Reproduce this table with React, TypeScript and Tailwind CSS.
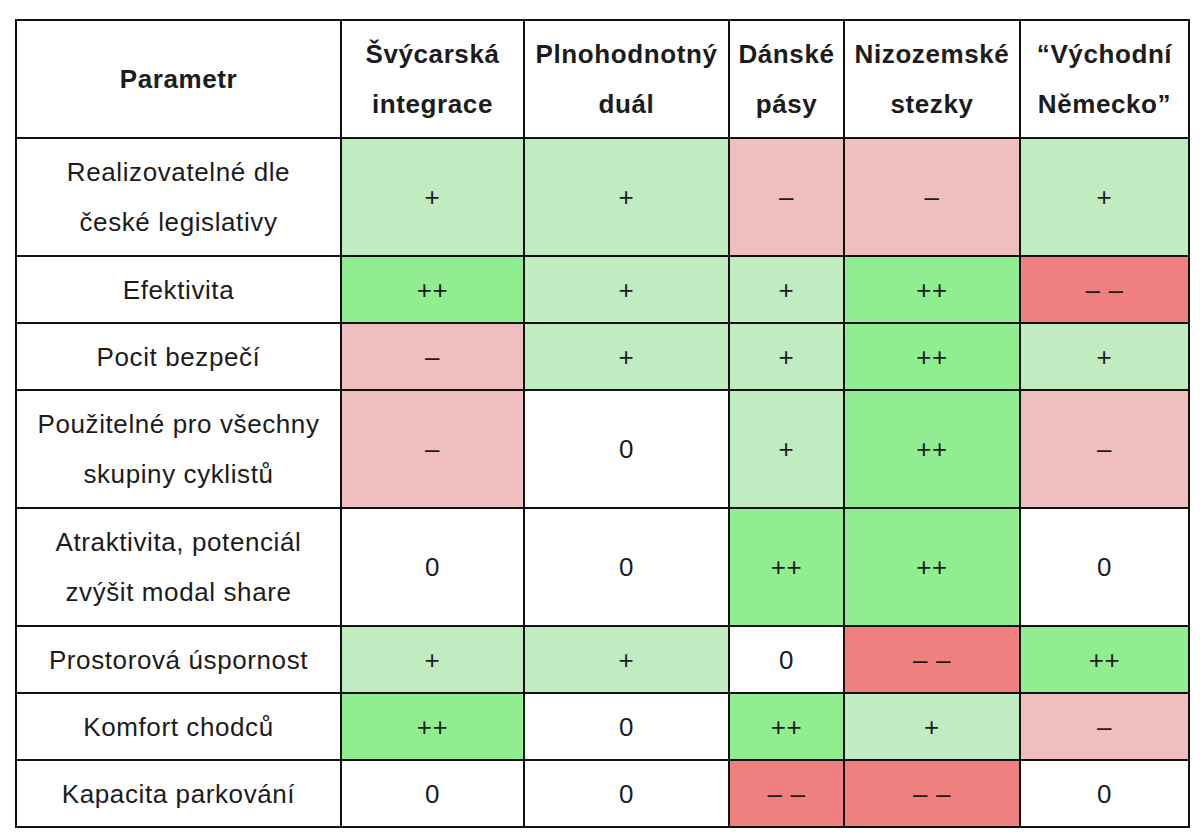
type Tone = "g" | "G" | "r" | "R" | "w";

type Cell = { v: string; t: Tone };

const toneClass: Record<Tone, string> = {
  g: "bg-[#c1ecc1]",
  G: "bg-[#90ee90]",
  r: "bg-[#efbfbf]",
  R: "bg-[#f08080]",
  w: "bg-white",
};

const headers = [
  ["Švýcarská", "integrace"],
  ["Plnohodnotný", "duál"],
  ["Dánské", "pásy"],
  ["Nizozemské", "stezky"],
  ["“Východní", "Německo”"],
];

const rows: { label: string[]; cells: Cell[] }[] = [
  {
    label: ["Realizovatelné dle", "české legislativy"],
    cells: [
      { v: "+", t: "g" },
      { v: "+", t: "g" },
      { v: "–", t: "r" },
      { v: "–", t: "r" },
      { v: "+", t: "g" },
    ],
  },
  {
    label: ["Efektivita"],
    cells: [
      { v: "++", t: "G" },
      { v: "+", t: "g" },
      { v: "+", t: "g" },
      { v: "++", t: "G" },
      { v: "– –", t: "R" },
    ],
  },
  {
    label: ["Pocit bezpečí"],
    cells: [
      { v: "–", t: "r" },
      { v: "+", t: "g" },
      { v: "+", t: "g" },
      { v: "++", t: "G" },
      { v: "+", t: "g" },
    ],
  },
  {
    label: ["Použitelné pro všechny", "skupiny cyklistů"],
    cells: [
      { v: "–", t: "r" },
      { v: "0", t: "w" },
      { v: "+", t: "g" },
      { v: "++", t: "G" },
      { v: "–", t: "r" },
    ],
  },
  {
    label: ["Atraktivita, potenciál", "zvýšit modal share"],
    cells: [
      { v: "0", t: "w" },
      { v: "0", t: "w" },
      { v: "++", t: "G" },
      { v: "++", t: "G" },
      { v: "0", t: "w" },
    ],
  },
  {
    label: ["Prostorová úspornost"],
    cells: [
      { v: "+", t: "g" },
      { v: "+", t: "g" },
      { v: "0", t: "w" },
      { v: "– –", t: "R" },
      { v: "++", t: "G" },
    ],
  },
  {
    label: ["Komfort chodců"],
    cells: [
      { v: "++", t: "G" },
      { v: "0", t: "w" },
      { v: "++", t: "G" },
      { v: "+", t: "g" },
      { v: "–", t: "r" },
    ],
  },
  {
    label: ["Kapacita parkování"],
    cells: [
      { v: "0", t: "w" },
      { v: "0", t: "w" },
      { v: "– –", t: "R" },
      { v: "– –", t: "R" },
      { v: "0", t: "w" },
    ],
  },
];

export default function App() {
  return (
    <div className="min-h-[840px] w-[1200px] bg-white pl-[15px] pt-[19px] font-['Liberation_Sans',Arial,sans-serif] text-[#1c1c1c]">
      <table className="w-[1173px] table-fixed border-collapse border-2 border-[#111] text-[26px] leading-[50px] tracking-[0.6px]">
        <colgroup>
          <col className="w-[325px]" />
          <col className="w-[183px]" />
          <col className="w-[205px]" />
          <col className="w-[115px]" />
          <col className="w-[176px]" />
          <col className="w-[169px]" />
        </colgroup>
        <thead>
          <tr className="h-[118px]">
            <th className="border-2 border-[#111] p-0 text-center font-bold">
              Parametr
            </th>
            {headers.map((h, i) => (
              <th
                key={i}
                className="whitespace-nowrap border-2 border-[#111] p-0 text-center font-bold"
              >
                {h[0]}
                <br />
                {h[1]}
              </th>
            ))}
          </tr>
        </thead>
        <tbody>
          {rows.map((row, i) => (
            <tr
              key={i}
              className={row.label.length > 1 ? "h-[118px]" : "h-[67px]"}
            >
              <td className="border-2 border-[#111] bg-white p-0 text-center">
                {row.label.map((l, j) => (
                  <div key={j}>{l}</div>
                ))}
              </td>
              {row.cells.map((c, j) => (
                <td
                  key={j}
                  className={`border-2 border-[#111] p-0 text-center ${toneClass[c.t]}`}
                >
                  {c.v}
                </td>
              ))}
            </tr>
          ))}
        </tbody>
      </table>
    </div>
  );
}
